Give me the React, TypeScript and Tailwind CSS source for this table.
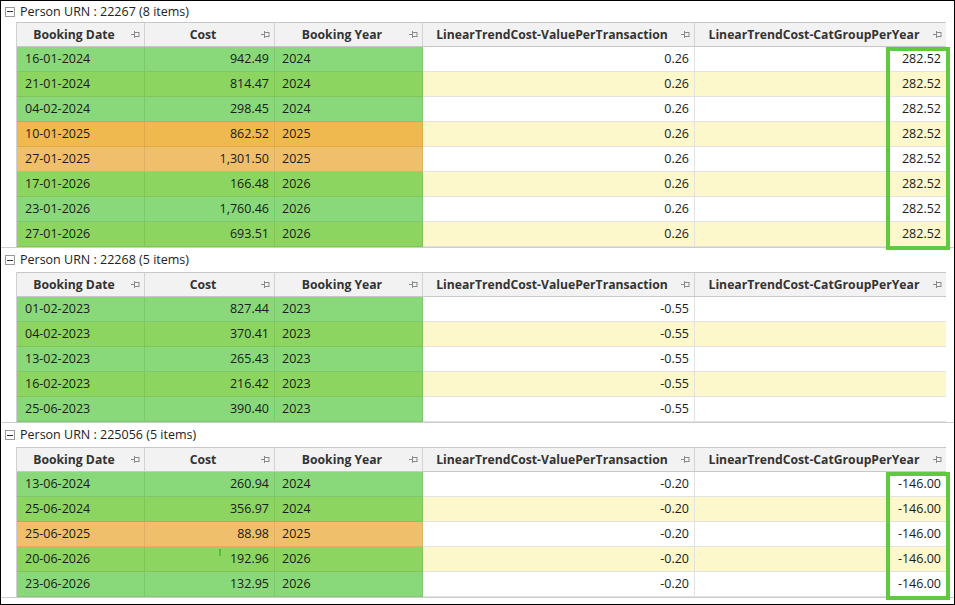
import React from "react";

type Tone = "G" | "O";
type Row = { date: string; cost: string; year: string; tone: Tone };
type Group = {
  urn: string;
  value: string;
  cat: string;
  highlight: boolean;
  rows: Row[];
};

const groups: Group[] = [
  {
    urn: "22267",
    value: "0.26",
    cat: "282.52",
    highlight: true,
    rows: [
      { date: "16-01-2024", cost: "942.49", year: "2024", tone: "G" },
      { date: "21-01-2024", cost: "814.47", year: "2024", tone: "G" },
      { date: "04-02-2024", cost: "298.45", year: "2024", tone: "G" },
      { date: "10-01-2025", cost: "862.52", year: "2025", tone: "O" },
      { date: "27-01-2025", cost: "1,301.50", year: "2025", tone: "O" },
      { date: "17-01-2026", cost: "166.48", year: "2026", tone: "G" },
      { date: "23-01-2026", cost: "1,760.46", year: "2026", tone: "G" },
      { date: "27-01-2026", cost: "693.51", year: "2026", tone: "G" },
    ],
  },
  {
    urn: "22268",
    value: "-0.55",
    cat: "",
    highlight: false,
    rows: [
      { date: "01-02-2023", cost: "827.44", year: "2023", tone: "G" },
      { date: "04-02-2023", cost: "370.41", year: "2023", tone: "G" },
      { date: "13-02-2023", cost: "265.43", year: "2023", tone: "G" },
      { date: "16-02-2023", cost: "216.42", year: "2023", tone: "G" },
      { date: "25-06-2023", cost: "390.40", year: "2023", tone: "G" },
    ],
  },
  {
    urn: "225056",
    value: "-0.20",
    cat: "-146.00",
    highlight: true,
    rows: [
      { date: "13-06-2024", cost: "260.94", year: "2024", tone: "G" },
      { date: "25-06-2024", cost: "356.97", year: "2024", tone: "G" },
      { date: "25-06-2025", cost: "88.98", year: "2025", tone: "O" },
      { date: "20-06-2026", cost: "192.96", year: "2026", tone: "G" },
      { date: "23-06-2026", cost: "132.95", year: "2026", tone: "G" },
    ],
  },
];

// colour of a conditional-format cell, depends on the alternating row bg beneath it
function toneClass(tone: Tone, alt: boolean) {
  if (tone === "G") return alt ? "bg-[#8cd560]" : "bg-[#89d879]";
  return alt ? "bg-[#f0b94f]" : "bg-[#f0bf6c]";
}

function PinIcon() {
  return (
    <svg width="9" height="7" viewBox="0 0 9 7" className="shrink-0">
      <path d="M0 3.5H3" stroke="#8a8a8a" strokeWidth="1" />
      <path d="M3.5 0V7" stroke="#8a8a8a" strokeWidth="1" />
      <rect x="3.5" y="1.5" width="4.5" height="4" fill="none" stroke="#8a8a8a" strokeWidth="1" />
    </svg>
  );
}

function HeaderCell({ label, w, last }: { label: string; w: string; last?: boolean }) {
  return (
    <div
      className={`${w} flex items-center h-full pr-[4px] ${
        last ? "" : "border-r border-[#d3d3d3]"
      }`}
    >
      <span className="flex-1 text-center font-bold text-[12.2px] text-[#333333] whitespace-nowrap pt-px">
        {label}
      </span>
      <PinIcon />
    </div>
  );
}

function GroupBlock({ g, first }: { g: Group; first: boolean }) {
  return (
    <div className={first ? "" : "border-t border-[#cdcdcd]"}>
      <div
        className={`flex items-center pl-[4px] gap-[5px] ${
          first ? "h-[21px]" : "h-[24px]"
        }`}
      >
        <div className="w-[10px] h-[10px] border border-[#9a9a9a] flex items-center justify-center">
          <div className="w-[6px] h-px bg-[#333333]" />
        </div>
        <span className="text-[#222222] pt-px">
          Person URN : {g.urn} ({g.rows.length} items)
        </span>
      </div>
      <div className="relative ml-[15px] w-[930px] border-l border-[#d0d0d0]">
        <div className="flex h-[25px] bg-[#f2f2f2] border-y border-[#c8c8c8]">
          <HeaderCell label="Booking Date" w="w-[128px]" />
          <HeaderCell label="Cost" w="w-[130px]" />
          <HeaderCell label="Booking Year" w="w-[148px]" />
          <HeaderCell label="LinearTrendCost-ValuePerTransaction" w="w-[272px]" />
          <HeaderCell label="LinearTrendCost-CatGroupPerYear" w="w-[251px]" last />
        </div>
        {g.rows.map((r, i) => {
          const alt = i % 2 === 1;
          const tc = toneClass(r.tone, alt);
          const plain = alt ? "bg-[#fdf7cc]" : "bg-white";
          return (
            <div key={i} className="flex h-[25px] text-[#1a1a1a]">
              <div
                className={`w-[128px] ${tc} flex items-center pl-[8px] pt-px border-r border-b border-[rgba(0,0,0,0.08)]`}
              >
                {r.date}
              </div>
              <div
                className={`relative w-[130px] ${tc} flex items-center justify-end pr-[5px] pt-px border-r border-b border-[rgba(0,0,0,0.08)]`}
              >
                {g.urn === "225056" && i === 3 && (
                  <span className="absolute left-[74px] top-[2px] w-[2px] h-[7px] bg-[#5ab83a]" />
                )}
                {r.cost}
              </div>
              <div
                className={`w-[148px] ${tc} flex items-center pl-[7px] pt-px border-r border-b border-[rgba(0,0,0,0.08)]`}
              >
                {r.year}
              </div>
              <div
                className={`w-[272px] ${plain} flex items-center justify-end pr-[5px] pt-px border-r border-b border-[#e2e2e2]`}
              >
                {g.value}
              </div>
              <div
                className={`w-[251px] ${plain} flex items-center justify-end pr-[5px] pt-px border-b border-[#e2e2e2]`}
              >
                {g.cat}
              </div>
            </div>
          );
        })}
        {g.highlight && (
          <div className="absolute left-[869px] w-[64px] top-[25px] bottom-[-3px] border-[4px] border-[#62c842]" />
        )}
      </div>
    </div>
  );
}

export default function App() {
  return (
    <div
      className="w-[955px] h-[605px] border border-black bg-white overflow-hidden text-[12.5px] leading-none"
      style={{ fontFamily: '"Open Sans", "Noto Sans", sans-serif' }}
    >
      {groups.map((g, i) => (
        <GroupBlock key={g.urn} g={g} first={i === 0} />
      ))}
      <div className="border-t border-[#cdcdcd]" />
    </div>
  );
}
